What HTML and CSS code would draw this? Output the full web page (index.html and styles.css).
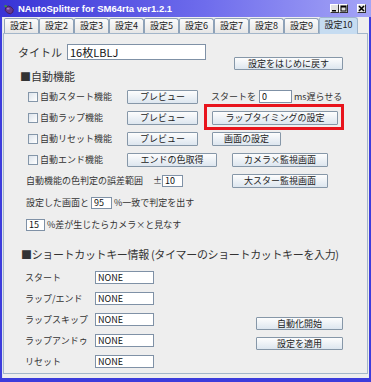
FILE: index.html
```html
<!DOCTYPE html>
<html lang="ja">
<head>
    <meta charset="UTF-8">
    <title>NAutoSplitter for SM64rta ver1.2.1</title>
    <link rel="stylesheet" href="styles.css">
</head>
<body>

<div class="window">
    <div class="titlebar">
        <svg class="app-icon" viewBox="0 0 12 12">
            <ellipse cx="6.8" cy="7" rx="4.6" ry="3.8" transform="rotate(35 6.8 7)" fill="#6a3a8c" stroke="#3a1a50" stroke-width="0.8"/>
            <ellipse cx="5.6" cy="5.6" rx="1.6" ry="1" fill="#a77cc4"/>
            <path d="M1 2.5 L3.5 1.5 L4.5 3.5 L2.5 4.2 Z" fill="#3f9a2c"/>
        </svg>
        <span class="title">NAutoSplitter for SM64rta ver1.2.1</span>
        <div class="controls">
            <span class="ctl"><svg viewBox="0 0 7 7"><rect x="1" y="5" width="4" height="1.5" fill="#000"/></svg></span>
            <span class="ctl"><svg viewBox="0 0 7 7"><rect x="1" y="1" width="5" height="5" fill="none" stroke="#000" stroke-width="1"/><rect x="1" y="1" width="5" height="1.5" fill="#000"/></svg></span>
            <span class="ctl close"><svg viewBox="0 0 7 7"><path d="M1 1 L6 6 M6 1 L1 6" stroke="#000" stroke-width="1.6"/></svg></span>
        </div>
    </div>

    <div class="client">
        <div class="tabs">
            <div class="tab">設定1</div>
            <div class="tab">設定2</div>
            <div class="tab">設定3</div>
            <div class="tab">設定4</div>
            <div class="tab">設定5</div>
            <div class="tab">設定6</div>
            <div class="tab">設定7</div>
            <div class="tab">設定8</div>
            <div class="tab">設定9</div>
            <div class="tab active">設定10</div>
        </div>

        <div class="panel">
            <div class="title-row">
                <span class="title-label">タイトル</span>
                <input class="field title-input" type="text" value="16枚LBLJ">
                <button class="btn reset-btn">設定をはじめに戻す</button>
            </div>

            <div class="heading">■自動機能</div>

            <div class="row feat-row">
                <span class="check"></span>
                <span class="feat">自動スタート機能</span>
                <button class="btn preview">プレビュー</button>
                <span class="col3">スタートを</span>
                <input class="field delay" type="text" value="0">
                <span class="ms">ms遅らせる</span>
            </div>
            <div class="row feat-row">
                <span class="check"></span>
                <span class="feat">自動ラップ機能</span>
                <button class="btn preview">プレビュー</button>
                <span class="marked">
                    <button class="btn lap-timing">ラップタイミングの設定</button>
                </span>
            </div>
            <div class="row feat-row">
                <span class="check"></span>
                <span class="feat">自動リセット機能</span>
                <button class="btn preview">プレビュー</button>
                <button class="btn screen-btn">画面の設定</button>
            </div>
            <div class="row feat-row">
                <span class="check"></span>
                <span class="feat">自動エンド機能</span>
                <button class="btn end-color">エンドの色取得</button>
                <button class="btn monitor">カメラ×監視画面</button>
            </div>

            <div class="row text-row">
                <span class="range-label">自動機能の色判定の誤差範囲</span>
                <span class="pm">±</span>
                <input class="field small" type="text" value="10">
                <button class="btn monitor star">大スター監視画面</button>
            </div>
            <div class="row text-row shift">
                <span>設定した画面と</span>
                <input class="field small gap" type="text" value="95">
                <span>%一致で判定を出す</span>
            </div>
            <div class="row text-row shift">
                <input class="field small first" type="text" value="15">
                <span>%差が生じたらカメラ×と見なす</span>
            </div>

            <div class="heading heading2">■ショートカットキー情報 (タイマーのショートカットキーを入力)</div>

            <div class="shortcuts">
                <div class="keys">
                    <div class="row key-row"><span class="key-label">スタート</span><input class="field key" type="text" value="NONE"></div>
                    <div class="row key-row"><span class="key-label">ラップ/エンド</span><input class="field key" type="text" value="NONE"></div>
                    <div class="row key-row"><span class="key-label">ラップスキップ</span><input class="field key" type="text" value="NONE"></div>
                    <div class="row key-row"><span class="key-label">ラップアンドゥ</span><input class="field key" type="text" value="NONE"></div>
                    <div class="row key-row"><span class="key-label">リセット</span><input class="field key" type="text" value="NONE"></div>
                </div>
                <div class="actions">
                    <button class="btn action">自動化開始</button>
                    <button class="btn action">設定を適用</button>
                </div>
            </div>
        </div>
    </div>
</div>

</body>
</html>
```

FILE: styles.css
```css
* {
    box-sizing: border-box;
}
body {
    margin: 0;
    background: #3c3cdc;
    font-family: "Noto Sans CJK JP", sans-serif;
    font-size: 9px;
    color: #333;
}
.window {
    width: 371px;
    height: 382px;
    background: #3c3cdc;
    padding: 0 2px 4px 2px;
    display: flex;
    flex-direction: column;
}
.titlebar {
    height: 17px;
    margin: 0 -2px;
    background: linear-gradient(to right, #3834d6, #6e6cec 55%, #a4a4f6);
    display: flex;
    align-items: center;
    padding: 0 5px 0 3px;
}
.app-icon {
    width: 11px;
    height: 12px;
}
.title {
    color: #fff;
    font: bold 9.5px "Liberation Sans", sans-serif;
    margin-left: 4px;
}
.controls {
    margin-left: auto;
    display: flex;
}
.ctl {
    width: 9px;
    height: 9px;
    background: #e2e2e2;
    border: 1px solid;
    border-color: #fff #303030 #303030 #fff;
    display: flex;
}
.ctl svg {
    width: 7px;
    height: 7px;
}
.ctl.close {
    margin-left: 9px;
}
.client {
    flex: 1;
    background: #eeeeee;
    border-left: 1px solid #dfe5ee;
    display: flex;
    flex-direction: column;
}
.tabs {
    display: flex;
    align-items: flex-end;
    height: 16px;
    padding-left: 1px;
    position: relative;
    z-index: 1;
}
.tab {
    width: 35px;
    height: 15px;
    border: 1px solid #8ea2b8;
    border-bottom: none;
    border-radius: 2px 3px 0 0;
    background: linear-gradient(#fbfbfb, #e6e6e6);
    font-size: 9px;
    line-height: 14px;
    text-align: center;
    color: #222;
}
.tab.active {
    width: 39px;
    height: 17px;
    margin-bottom: -1px;
    background: #c6dcf1;
    border-color: #9fb6cc;
}
.panel {
    flex: 1;
    border: 1px solid #a3b6ca;
    margin: 0 1px 4px 0;
    padding-top: 10px;
}
.title-row {
    display: flex;
    align-items: flex-start;
    padding-left: 14px;
}
.title-label {
    width: 49px;
    font-size: 11px;
    line-height: 16px;
    color: #333;
}
.field {
    border: 1px solid #7f91a6;
    background: #fff;
    font-family: "Noto Sans CJK JP", sans-serif;
    font-size: 9px;
    color: #111;
    padding: 0 2px;
    height: 13px;
    margin: 0;
    outline: none;
}
.title-input {
    width: 139px;
    height: 16px;
    font-size: 11px;
}
.btn {
    height: 14px;
    border: 1px solid #8697a8;
    border-radius: 1px;
    background: linear-gradient(#fdfdfd, #dde6ef);
    font-family: "Noto Sans CJK JP", sans-serif;
    font-size: 9px;
    line-height: 12px;
    color: #222;
    padding: 0;
    margin: 0;
}
.reset-btn {
    width: 109px;
    height: 13px;
    margin: 13px 0 0 28px;
}
.heading {
    font-size: 11px;
    line-height: 12px;
    padding-left: 16px;
    margin-bottom: 4px;
}
.row {
    display: flex;
    align-items: center;
    height: 21px;
}
.feat-row {
    padding-left: 24px;
}
.check {
    width: 10px;
    height: 10px;
    border: 1px solid #8496a9;
    background: linear-gradient(135deg, #dde4ec, #fff);
    margin-right: 2px;
}
.feat {
    width: 87px;
}
.preview {
    width: 71px;
}
.col3 {
    margin-left: 13px;
    width: 48px;
}
.delay {
    width: 33px;
}
.ms {
    margin-left: 2px;
}
.marked {
    position: relative;
    margin-left: 14px;
    display: flex;
}
.marked::after {
    content: "";
    position: absolute;
    top: -7px;
    right: -6px;
    bottom: -5px;
    left: -8px;
    border: 3px solid #e8141c;
}
.lap-timing {
    width: 126px;
}
.screen-btn {
    width: 69px;
    margin-left: 14px;
}
.end-color {
    width: 90px;
}
.monitor {
    width: 96px;
    margin-left: 15px;
}
.text-row {
    padding-left: 22px;
}
.shift {
    margin-top: 1px;
}
.range-label {
    width: 127px;
}
.pm {
    width: 9px;
}
.small {
    width: 21px;
    height: 12px;
}
.monitor.star {
    margin-left: 49px;
}
.gap {
    margin: 0 2px;
}
.first {
    width: 19px;
    margin-right: 2px;
}
.heading2 {
    margin-top: 13px;
    padding-left: 17px;
    margin-bottom: 7px;
    letter-spacing: -0.35px;
}
.shortcuts {
    display: flex;
}
.key-row {
    padding-left: 21px;
}
.key-label {
    width: 70px;
}
.key {
    width: 59px;
}
.actions {
    display: flex;
    flex-direction: column;
    gap: 7px;
    margin: 50px 0 0 102px;
}
.action {
    width: 87px;
    height: 13px;
}
```
